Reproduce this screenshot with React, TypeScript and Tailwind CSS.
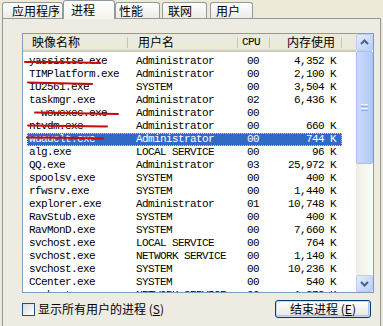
import React from 'react';

// 任务管理器 - 进程页
type Proc = { name: string; user: string; cpu: string; mem: string };

const procs: Proc[] = [
  { name: 'yassistse.exe', user: 'Administrator', cpu: '00', mem: '4,352 K' },
  { name: 'TIMPlatform.exe', user: 'Administrator', cpu: '00', mem: '2,100 K' },
  { name: 'IU2561.exe', user: 'SYSTEM', cpu: '00', mem: '3,504 K' },
  { name: 'taskmgr.exe', user: 'Administrator', cpu: '02', mem: '6,436 K' },
  { name: '  wowexec.exe', user: 'Administrator', cpu: '00', mem: '' },
  { name: 'ntvdm.exe', user: 'Administrator', cpu: '00', mem: '660 K' },
  { name: 'wuauclt.exe', user: 'Administrator', cpu: '00', mem: '744 K' },
  { name: 'alg.exe', user: 'LOCAL SERVICE', cpu: '00', mem: '96 K' },
  { name: 'QQ.exe', user: 'Administrator', cpu: '03', mem: '25,972 K' },
  { name: 'spoolsv.exe', user: 'SYSTEM', cpu: '00', mem: '400 K' },
  { name: 'rfwsrv.exe', user: 'SYSTEM', cpu: '00', mem: '1,440 K' },
  { name: 'explorer.exe', user: 'Administrator', cpu: '01', mem: '10,748 K' },
  { name: 'RavStub.exe', user: 'SYSTEM', cpu: '00', mem: '400 K' },
  { name: 'RavMonD.exe', user: 'SYSTEM', cpu: '00', mem: '7,660 K' },
  { name: 'svchost.exe', user: 'LOCAL SERVICE', cpu: '00', mem: '764 K' },
  { name: 'svchost.exe', user: 'NETWORK SERVICE', cpu: '00', mem: '1,140 K' },
  { name: 'svchost.exe', user: 'SYSTEM', cpu: '00', mem: '10,236 K' },
  { name: 'CCenter.exe', user: 'SYSTEM', cpu: '00', mem: '540 K' },
  { name: 'svchost.exe', user: 'NETWORK SERVICE', cpu: '00', mem: '1,372 K' },
];

const SELECTED = 6;

const cjk = "font-['Noto_Sans_CJK_SC',sans-serif]";
const mono = "font-['Liberation_Mono',monospace]";

function Tab({ label, w, active, className = '' }: { label: string; w: string; active?: boolean; className?: string }) {
  if (active) {
    return (
      <div
        className={`${w} ${className} relative z-10 -mb-px h-[19px] rounded-t-[3px] border-x border-t border-[#919B9C] bg-gradient-to-b from-white to-[#F4F3EE] pl-[7px] text-[12px] leading-[17px] text-black`}
      >
        {label}
      </div>
    );
  }
  return (
    <div
      className={`${w} ${className} h-[16px] rounded-t-[3px] border-x border-t border-[#919B9C] bg-gradient-to-b from-white to-[#ECEBE5] text-[12px] leading-[15px] text-black`}
    >
      {label}
    </div>
  );
}

function ScrollBtn({ up }: { up?: boolean }) {
  return (
    <div className="flex h-[17px] w-[17px] items-center justify-center rounded-[2px] border border-[#BBCDF5] bg-gradient-to-br from-[#E4ECFE] to-[#BACEF9]">
      <svg width="15" height="15" viewBox="0 0 15 15">
        <path
          d={up ? 'M4 9 L7.5 5.5 L11 9' : 'M4 6 L7.5 9.5 L11 6'}
          fill="none"
          stroke="#4D6185"
          strokeWidth="2"
        />
      </svg>
    </div>
  );
}

function HeadCell({ w, children, className = '' }: { w: string; children?: React.ReactNode; className?: string }) {
  return (
    <div className={`${w} ${className} relative h-full leading-[16px]`}>
      {children}
      <span className="absolute right-0 top-[3px] bottom-[4px] w-px bg-[#C7C5B2]" />
    </div>
  );
}

export default function App() {
  return (
    <div className={`relative h-[326px] w-[383px] overflow-hidden bg-[#ECE9D8] ${cjk}`}>
      {/* tabs */}
      <div className="flex h-[18px] items-end pl-[2px]">
        <Tab label="应用程序" w="w-[61px]" className="pl-[9px]" />
        <Tab label="进程" w="w-[52px]" active />
        <Tab label="性能" w="w-[45px]" className="pl-[3px]" />
        <Tab label="联网" w="w-[45px]" className="ml-[2px] pl-[5px]" />
        <Tab label="用户" w="w-[43px]" className="ml-[3px] pl-[5px]" />
      </div>

      {/* tab page */}
      <div className="ml-[2px] h-[320px] w-[379px] border border-[#919B9C] bg-[#EEECE2] pl-[19px] pt-[14px]">
        {/* list */}
        <div className="flex h-[260px] w-[352px] border border-[#7F9DB9] bg-white">
          <div className="w-[333px] overflow-hidden">
            <div className="flex h-[18px] bg-[#EBEADB] text-[12px] text-black shadow-[inset_0_-1px_0_#CBC7B8,inset_0_-2px_0_#D6D2C2,inset_0_-3px_0_#E2DED6]">
              <HeadCell w="w-[105px]" className="pl-[9px]">映像名称</HeadCell>
              <HeadCell w="w-[110px]" className="pl-[10px]">用户名</HeadCell>
              <HeadCell w="w-[32px]" className={`pl-[4px] text-[11px] tracking-[-0.6px] ${mono}`}>CPU</HeadCell>
              <HeadCell w="w-[72px]" className="pr-[7px] text-right">内存使用</HeadCell>
              <div className="flex-1" />
            </div>
            <div className={`pt-[3px] text-[11px] tracking-[-0.6px] ${mono}`}>
              {procs.map((p, i) => (
                <div
                  key={i}
                  className={`ml-[4px] flex h-[13px] w-[315px] items-center whitespace-pre leading-[13px] ${
                    i === SELECTED
                      ? 'bg-[#316AC5] text-white outline-1 -outline-offset-1 outline-dotted outline-[#E8D48A]'
                      : 'text-black'
                  }`}
                >
                  <span className="w-[101px] pl-[2px]">{p.name}</span>
                  <span className="w-[110px] pl-[8px]">{p.user}</span>
                  <span className="w-[32px] pl-[9px]">{p.cpu}</span>
                  <span className="w-[72px] pr-[6px] text-right">{p.mem}</span>
                </div>
              ))}
            </div>
          </div>

          {/* scrollbar */}
          <div className="flex w-[17px] flex-col bg-gradient-to-r from-[#EEEDE5] to-[#FDFDFA]">
            <ScrollBtn up />
            <div className="flex h-[113px] items-center justify-center rounded-[2px] border border-[#A9C0F4] bg-gradient-to-r from-[#CAD9FC] via-[#C0D2FB] to-[#B3C8F8]">
              <div className="flex w-[7px] flex-col gap-px">
                <span className="h-px bg-[#EEF4FE]" />
                <span className="h-px bg-[#8CB0F8]" />
                <span className="h-px bg-[#EEF4FE]" />
                <span className="h-px bg-[#8CB0F8]" />
              </div>
            </div>
            <div className="flex-1" />
            <ScrollBtn />
          </div>
        </div>

        {/* bottom row */}
        <div className="mt-[7px] flex h-[18px] w-[352px] items-center justify-between pr-[3px]">
          <label className="flex items-center text-[12px] text-black">
            <span className="h-[13px] w-[13px] border border-[#1C5180] bg-gradient-to-br from-[#DCDBD5] to-white" />
            <span className="ml-[3px] leading-[14px]">
              显示所有用户的进程 (<span className="underline">S</span>)
            </span>
          </label>
          <button className="h-[18px] w-[96px] rounded-[3px] border border-[#003C74] bg-gradient-to-b from-white to-[#E8E7E0] text-[12px] leading-[14px] text-black shadow-[inset_0_0_0_1px_#C6D9F5,inset_-1px_-1px_0_1px_#A9C5EF]">
            结束进程 (<span className="underline">E</span>)
          </button>
        </div>
      </div>

      {/* hand-drawn red strikes */}
      <svg className="pointer-events-none absolute left-0 top-0" width="383" height="326" viewBox="0 0 383 326">
        <g fill="none" stroke="#C40C0C" strokeWidth="2" strokeLinecap="round">
          <path d="M25 62 Q62 61.5 100 63" />
          <path d="M28 82.5 Q60 83 92 84" />
          <path d="M35 112.5 Q76 113 118 114" />
          <path d="M28 125.5 Q68 126 107 126.5" />
          <path d="M27 137.5 Q64 137.5 103 138.5" />
        </g>
      </svg>
    </div>
  );
}
